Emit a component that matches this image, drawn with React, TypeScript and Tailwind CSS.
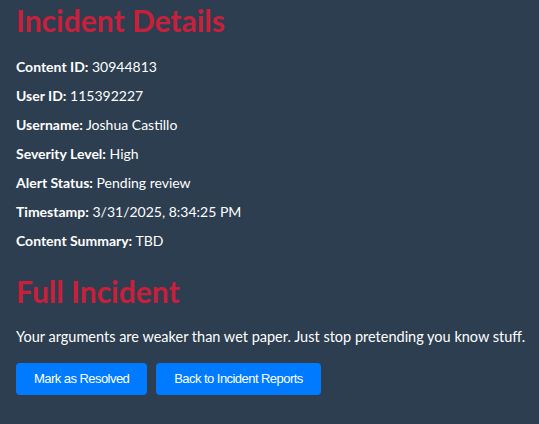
import React from "react";

const rows: [string, string][] = [
  ["Content ID:", "30944813"],
  ["User ID:", "115392227"],
  ["Username:", "Joshua Castillo"],
  ["Severity Level:", "High"],
  ["Alert Status:", "Pending review"],
  ["Timestamp:", "3/31/2025, 8:34:25 PM"],
  ["Content Summary:", "TBD"],
];

export default function App() {
  return (
    <div
      className="min-h-[424px] w-full bg-[#2c3e50] px-4 pt-0 text-white"
      style={{ fontFamily: 'Lato, "Noto Sans", sans-serif' }}
    >
      <h1 className="m-0 text-[30px] font-bold leading-[40px] text-[#c8203a]">Incident Details</h1>
      <div className="mt-[17px] flex flex-col gap-[9px]">
        {rows.map(([k, v]) => (
          <p key={k} className="m-0 text-[14px] leading-[20px]">
            <strong className="font-bold">{k}</strong> {v}
          </p>
        ))}
      </div>
      <h2 className="mt-[20px] text-[30px] font-bold leading-[40px] text-[#c8203a]">Full Incident</h2>
      <p className="mt-[16px] whitespace-nowrap text-[14.5px] leading-[20px]">
        Your arguments are weaker than wet paper. Just stop pretending you know stuff.
      </p>
      <div className="mt-[16px] flex gap-[9px]">
        <button
          className="h-[32px] rounded-[4px] bg-[#007bff] px-[18px] text-[13px] tracking-[-0.55px] text-white"
          style={{ fontFamily: '"Liberation Sans", Arial, sans-serif' }}
        >
          Mark as Resolved
        </button>
        <button
          className="h-[32px] rounded-[4px] bg-[#007bff] px-[18px] text-[13px] tracking-[-0.55px] text-white"
          style={{ fontFamily: '"Liberation Sans", Arial, sans-serif' }}
        >
          Back to Incident Reports
        </button>
      </div>
    </div>
  );
}
